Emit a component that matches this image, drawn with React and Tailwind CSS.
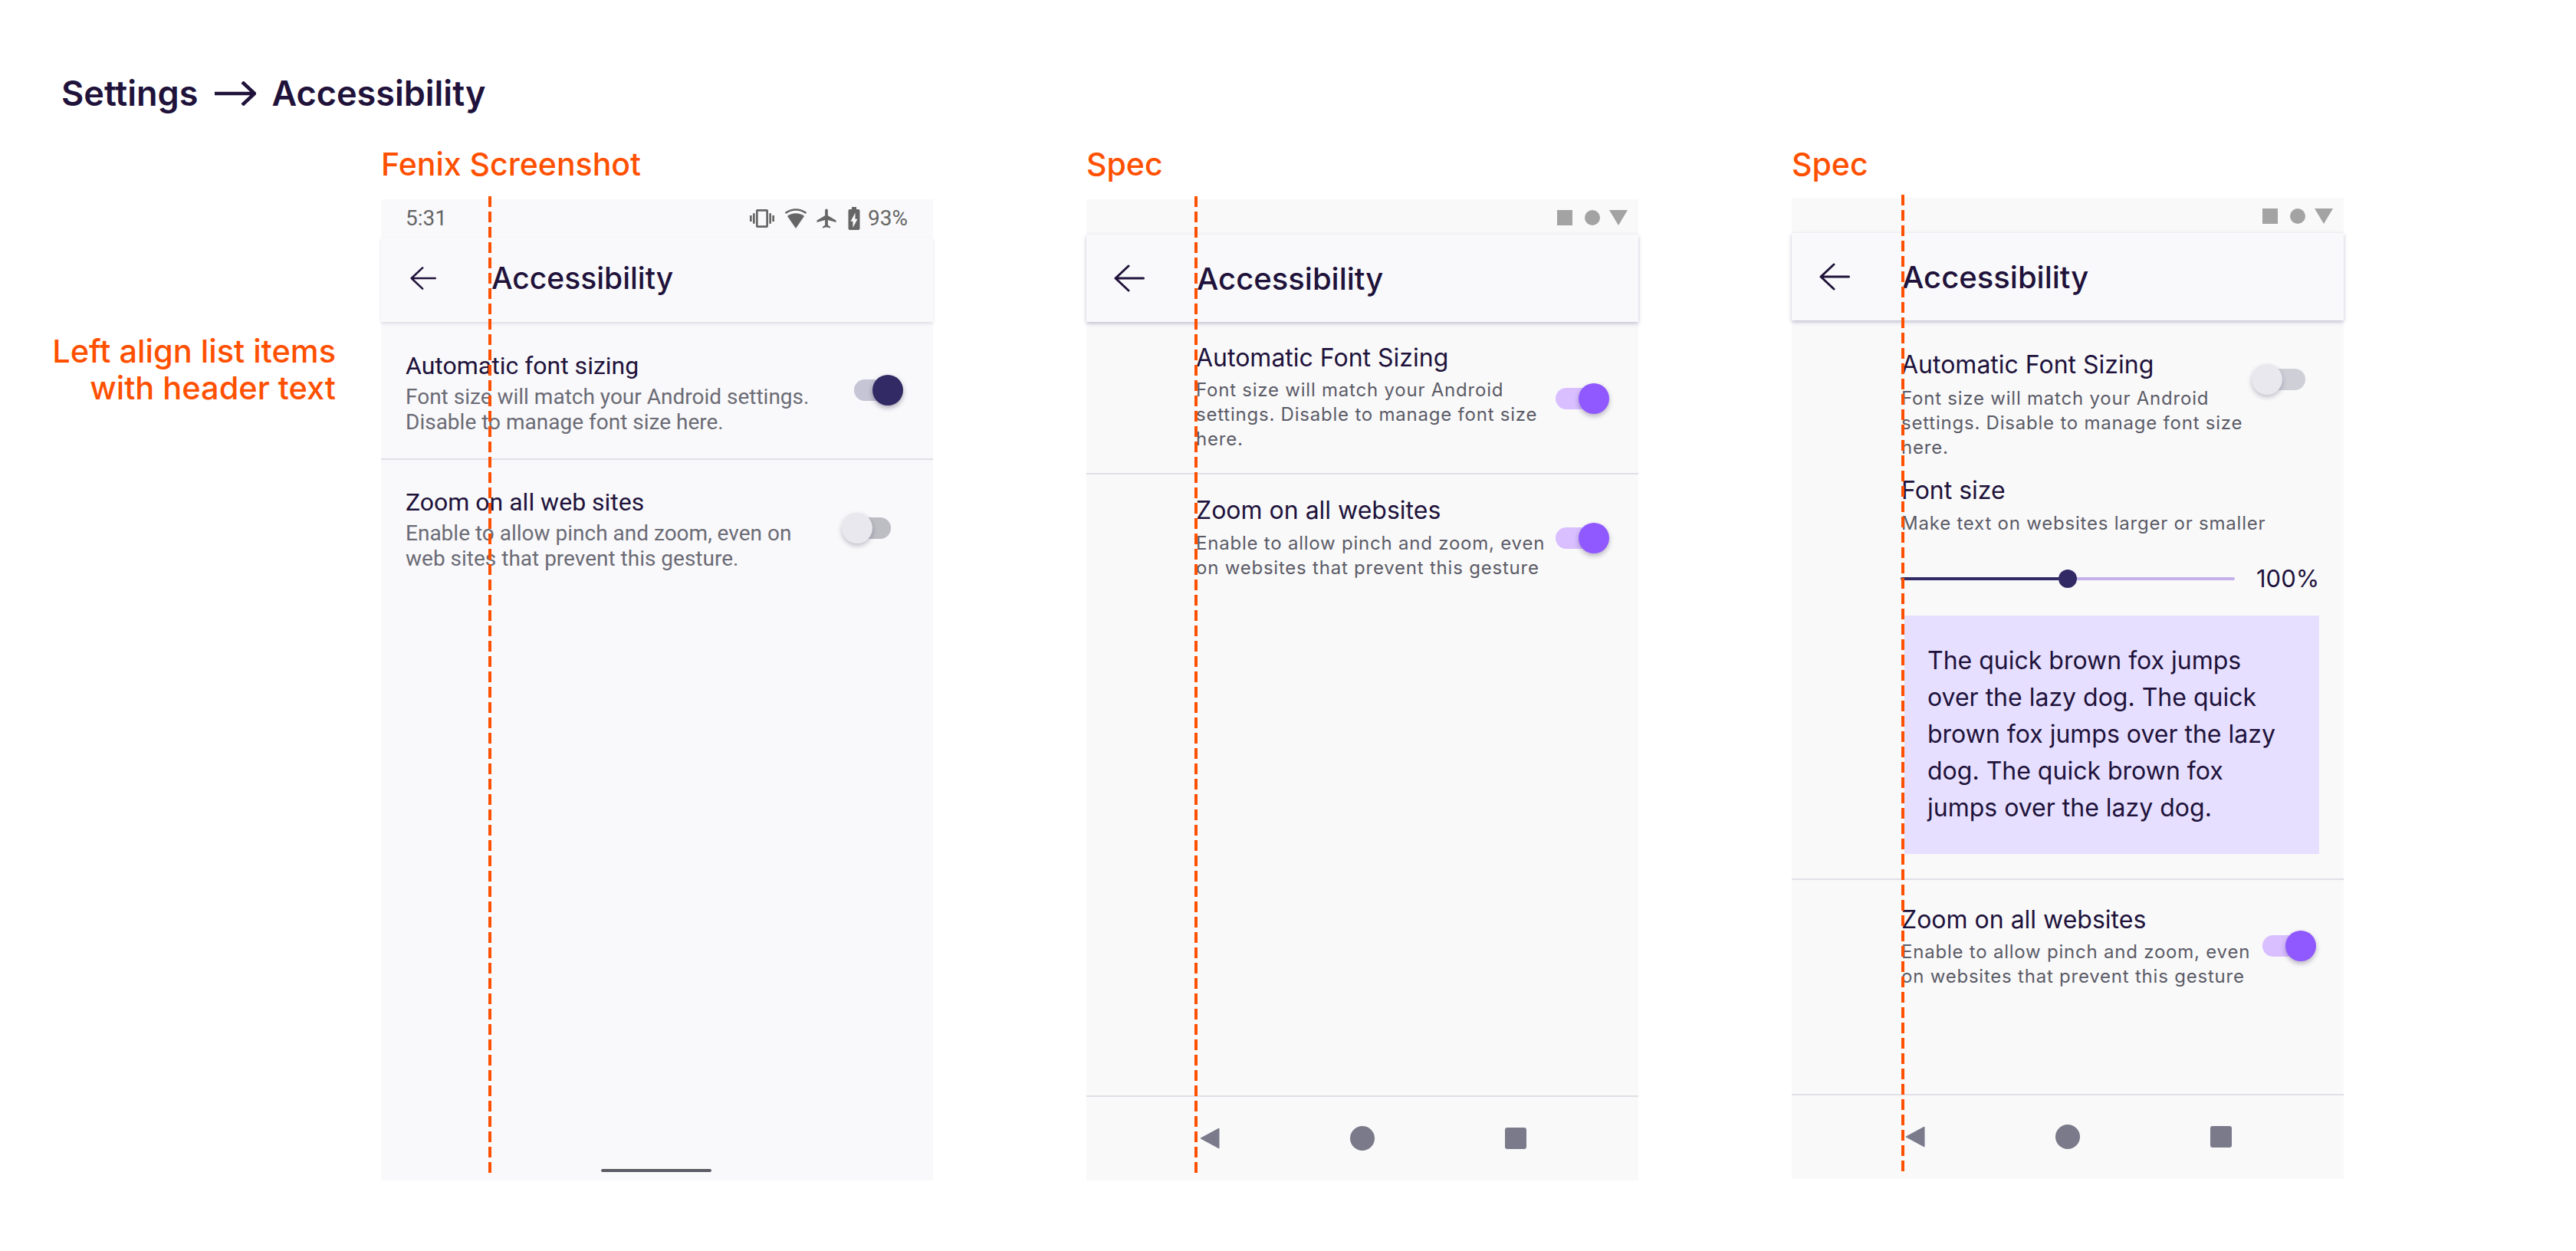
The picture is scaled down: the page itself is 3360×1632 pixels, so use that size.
import React from 'react';
import { MdVibration, MdAirplanemodeActive, MdBatteryChargingFull } from 'react-icons/md';

const DashedGuide = ({ className }) => (
  <svg width="4" height="1276" className={`absolute top-[-4px] z-10 ${className}`}>
    <line x1="2" y1="0" x2="2" y2="1276" stroke="#ff5000" strokeWidth="4" strokeDasharray="14 6" />
  </svg>
);

const BackArrow = ({ className }) => (
  <svg viewBox="0 0 40 36" fill="none" stroke="currentColor" strokeWidth="3" strokeLinecap="round" strokeLinejoin="round" className={className}>
    <path d="M38.5 18H2M19 2 2 18l17 16" />
  </svg>
);

const Toggle = ({ on, className = '' }) => (
  <div className={`flex items-center w-[70px] h-[40px] shrink-0 ${className}`}>
    {on ? (
      <>
        <div className="w-[40px] h-[28px] rounded-l-full bg-[#d9bfff] -mr-[10px]" />
        <div className="w-[40px] h-[40px] rounded-full bg-[#9059ff] shadow-[0_3px_6px_rgba(32,18,58,0.3)] z-[1]" />
      </>
    ) : (
      <>
        <div className="w-[40px] h-[40px] rounded-full bg-[#e9e8ee] shadow-[0_3px_6px_rgba(32,18,58,0.25)] z-[1]" />
        <div className="w-[40px] h-[28px] rounded-r-full bg-[#cfcfd8] -ml-[10px]" />
      </>
    )}
  </div>
);

const SpecStatus = () => (
  <div className="h-[46px] flex items-start justify-end pt-[14px] pr-[14px]">
    <div className="w-[20px] h-[20px] bg-[#a3a3a3] mr-[16px]" />
    <div className="w-[20px] h-[20px] rounded-full bg-[#a3a3a3] mr-[12px]" />
    <svg viewBox="0 0 24 20" className="w-[24px] h-[20px]"><path d="M0 0h24L12 20z" fill="#a3a3a3" /></svg>
  </div>
);

const SpecAppBar = () => (
  <div className="h-[114px] flex items-center bg-[#f9f9fb] shadow-[0_2px_5px_rgba(60,50,110,0.3)] relative">
    <BackArrow className="w-[40px] h-[36px] ml-[36px] text-[#20123a]" />
    <h2 className="ml-[68px] mt-[2px] text-[40px] leading-[48px] font-medium text-[#20123a] font-['Inter',sans-serif]">Accessibility</h2>
  </div>
);

const SpecNav = () => (
  <div className="mt-auto h-[111px] border-t-2 border-[#e0e0e6] relative">
    <svg viewBox="0 0 26 28" className="absolute left-[148px] top-[40px] w-[26px] h-[28px]">
      <path d="M1 14 25 1v26z" fill="#7a7a8a" stroke="#7a7a8a" strokeWidth="1" strokeLinejoin="round" />
    </svg>
    <div className="absolute left-[344px] top-[38px] w-[32px] h-[32px] rounded-full bg-[#7a7a8a]" />
    <div className="absolute left-[546px] top-[40px] w-[28px] h-[28px] rounded-[3px] bg-[#7a7a8a]" />
  </div>
);

const Title = ({ children, className = '' }) => (
  <p className={`text-[32px] leading-[40px] text-[#20123a] font-['Inter',sans-serif] ${className}`}>{children}</p>
);

const Sub = ({ children, className = '' }) => (
  <p className={`text-[24px] leading-[32px] tracking-[0.78px] text-[#5b5b66] font-['Inter',sans-serif] ${className}`}>{children}</p>
);

const Label = ({ children }) => (
  <h3 className="h-[66px] text-[41px] leading-[40px] font-medium text-[#ff5000] font-['Inter',sans-serif]">{children}</h3>
);

const FenixPanel = () => (
  <div className="relative w-[720px] h-[1280px] bg-[#f9f9fb]">
    <DashedGuide className="left-[140px]" />
    <div className="h-[50px] flex items-center pl-[32px] pr-[33px] text-[#666666] font-['Roboto',sans-serif] text-[28px]">
      <span>5:31</span>
      <div className="ml-auto flex items-center">
        <MdVibration className="w-[32px] h-[32px]" />
        <svg viewBox="0 0 30 30" className="w-[30px] h-[30px] ml-[13px]">
          <path d="M15 28 4 12c6-5 16-5 22 0z" fill="#666666" />
          <path d="M1.5 8c8-6 19-6 27 0" fill="none" stroke="#666666" strokeWidth="2.5" />
        </svg>
        <MdAirplanemodeActive className="w-[30px] h-[30px] ml-[10px]" />
        <MdBatteryChargingFull className="w-[36px] h-[36px] ml-[3px] -mr-[6px]" />
        <span className="ml-[6px]">93%</span>
      </div>
    </div>
    <div className="h-[110px] flex items-center pb-[4px] shadow-[0_2px_4px_rgba(60,50,110,0.15)] relative">
      <BackArrow className="w-[34px] h-[32px] ml-[38px] text-[#20123a]" />
      <h2 className="ml-[72px] text-[39px] leading-[48px] font-medium text-[#20123a] font-['Inter',sans-serif]">Accessibility</h2>
    </div>
    <div className="h-[180px] flex justify-between pl-[32px] pr-[39px] pt-[37px] border-b-2 border-[#e0e0e6] font-['Roboto',sans-serif]">
      <div>
        <p className="text-[32px] leading-[40px] text-[#20123a]">Automatic font sizing</p>
        <p className="mt-[4px] text-[28px] leading-[33px] text-[#6b6b75]">Font size will match your Android settings.<br />Disable to manage font size here.</p>
      </div>
      <div className="flex items-center w-[64px] h-[40px] mt-[32px] shrink-0">
        <div className="w-[40px] h-[28px] rounded-l-full bg-[#c5c5d6] -mr-[16px]" />
        <div className="w-[40px] h-[40px] rounded-full bg-[#312a65] shadow-[0_3px_6px_rgba(32,18,58,0.35)] z-[1]" />
      </div>
    </div>
    <div className="flex justify-between pl-[32px] pr-[55px] pt-[35px] font-['Roboto',sans-serif]">
      <div>
        <p className="text-[32px] leading-[40px] text-[#20123a]">Zoom on all web sites</p>
        <p className="mt-[4px] text-[28px] leading-[33px] text-[#6b6b75]">Enable to allow pinch and zoom, even on<br />web sites that prevent this gesture.</p>
      </div>
      <div className="flex items-center w-[64px] h-[40px] mt-[34px] shrink-0">
        <div className="w-[40px] h-[40px] rounded-full bg-[#e9e8ee] shadow-[0_3px_6px_rgba(32,18,58,0.25)] z-[1]" />
        <div className="w-[40px] h-[28px] rounded-r-full bg-[#bdbdc4] -ml-[16px]" />
      </div>
    </div>
    <div className="absolute left-[287px] bottom-[11px] w-[144px] h-[4px] rounded-full bg-[#5b5b66]" />
  </div>
);

const SpecOne = () => (
  <div className="relative w-[720px] h-[1280px] bg-[#f9f9fa] flex flex-col">
    <DashedGuide className="left-[141px]" />
    <SpecStatus />
    <SpecAppBar />
    <div className="h-[199px] flex justify-between pl-[143px] pr-[38px] pt-[27px] border-b-2 border-[#e0e0e6]">
      <div className="w-[462px]">
        <Title>Automatic Font Sizing</Title>
        <Sub className="mt-[6px]">Font size will match your Android settings. Disable to manage font size here.</Sub>
      </div>
      <Toggle on className="mt-[53px]" />
    </div>
    <div className="flex justify-between pl-[143px] pr-[38px] pt-[27px]">
      <div className="w-[462px]">
        <Title>Zoom on all websites</Title>
        <Sub className="mt-[7px]">Enable to allow pinch and zoom, even on websites that prevent this gesture</Sub>
      </div>
      <Toggle on className="mt-[36px]" />
    </div>
    <SpecNav />
  </div>
);

const SpecTwo = () => (
  <div className="relative w-[720px] h-[1280px] -mt-[2px] bg-[#f9f9fa] flex flex-col">
    <DashedGuide className="left-[143px]" />
    <SpecStatus />
    <SpecAppBar />
    <div className="flex justify-between pl-[143px] pr-[50px] pt-[38px]">
      <div className="w-[462px]">
        <Title>Automatic Font Sizing</Title>
        <Sub className="mt-[8px]">Font size will match your Android settings. Disable to manage font size here.</Sub>
      </div>
      <Toggle className="mt-[19px]" />
    </div>
    <div className="pl-[143px] mt-[20px]">
      <Title>Font size</Title>
      <Sub className="mt-[7px]">Make text on websites larger or smaller</Sub>
    </div>
    <div className="flex items-center h-[40px] mt-[36px] ml-[142px]">
      <div className="flex items-center w-[436px]">
        <div className="w-[206px] h-[4px] rounded-l-full bg-[#312a65]" />
        <div className="w-[24px] h-[24px] rounded-full bg-[#312a65]" />
        <div className="flex-1 h-[4px] rounded-r-full bg-[#c4b0ea]" />
      </div>
      <span className="ml-[28px] text-[31px] leading-[40px] text-[#20123a] font-['Inter',sans-serif]">100%</span>
    </div>
    <div className="ml-[147px] mt-[28px] w-[541px] h-[311px] bg-[#e6dfff] pl-[30px] pt-[35px] pr-[40px] text-[32px] leading-[48px] text-[#20123a] font-['Inter',sans-serif]">
      The quick brown fox jumps over the lazy dog. The quick brown fox jumps over the lazy dog. The quick brown fox jumps over the lazy dog.
    </div>
    <div className="mt-[32px] border-t-2 border-[#e0e0e6] flex justify-between pl-[143px] pr-[36px] pt-[32px]">
      <div className="w-[462px]">
        <Title>Zoom on all websites</Title>
        <Sub className="mt-[6px]">Enable to allow pinch and zoom, even on websites that prevent this gesture</Sub>
      </div>
      <Toggle on className="mt-[34px]" />
    </div>
    <SpecNav />
  </div>
);

export default function App() {
  return (
    <div className="w-[3360px] h-[1632px] bg-white overflow-hidden">
      <h1 className="pt-[92px] pl-[80px] flex items-center h-[152px] text-[45px] leading-[60px] font-semibold text-[#20123a] font-['Inter',sans-serif]">
        <span>Settings</span>
        <svg viewBox="0 0 54 32" fill="none" stroke="currentColor" strokeWidth="4.5" strokeLinejoin="miter" className="w-[54px] h-[32px] ml-[22px] mr-[20px]">
          <path d="M0 16h52M36 1l16 15-16 15" />
        </svg>
        <span>Accessibility</span>
      </h1>
      <div className="flex mt-[42px]">
        <div className="w-[497px] pr-[59px] pt-[240px] text-right text-[41.5px] leading-[48px] font-medium text-[#ff5000] font-['Inter',sans-serif]">
          Left align list items<br />with header text
        </div>
        <div className="flex gap-[200px]">
          <div>
            <Label>Fenix Screenshot</Label>
            <FenixPanel />
          </div>
          <div>
            <Label>Spec</Label>
            <SpecOne />
          </div>
          <div>
            <Label>Spec</Label>
            <SpecTwo />
          </div>
        </div>
      </div>
    </div>
  );
}
